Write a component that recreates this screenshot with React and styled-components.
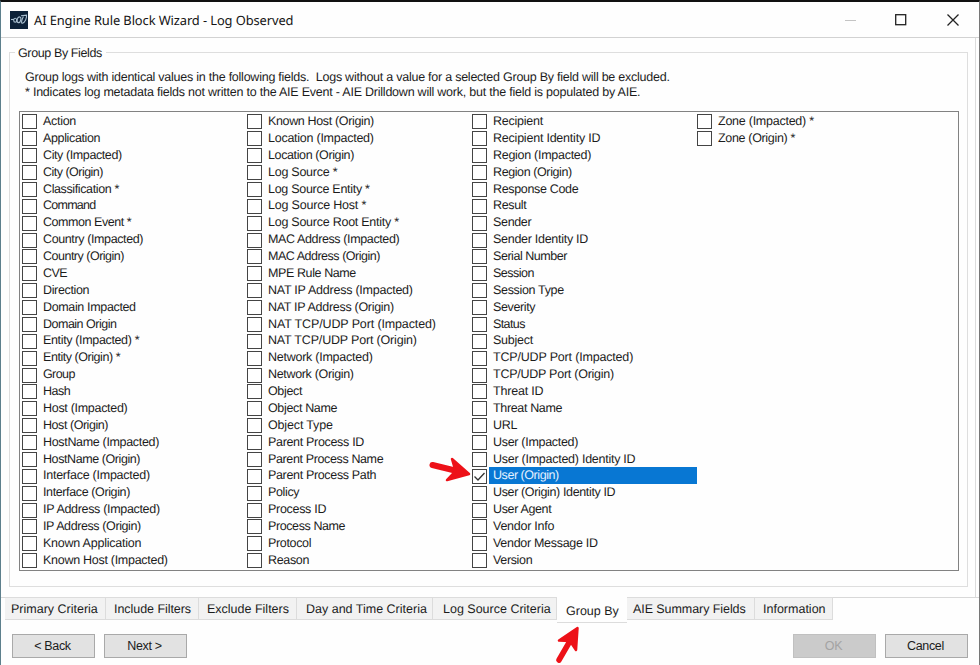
import React from "react";
import styled, { createGlobalStyle } from "styled-components";

const Global = createGlobalStyle`
  * { box-sizing: border-box; }
  body { margin: 0; background: #fff; overflow: hidden; }
`;

const Window = styled.div`
  position: relative;
  display: flex;
  flex-direction: column;
  width: 980px;
  height: 665px;
  background: #fefefe;
  border-top: 2px solid #111;
  border-left: 1px solid #5d7f8c;
  border-right: 1px solid #777;
  font-family: "Liberation Sans", Arial, sans-serif;
  font-size: 12.5px;
  color: #1c1c1c;
  white-space: pre;
  text-rendering: geometricPrecision;
`;

const TitleBar = styled.header`
  display: flex;
  align-items: center;
  height: 36px;
  flex: none;
  padding-left: 9px;
  border-bottom: 1px solid #d2d2d2;
`;

const AppIcon = styled.svg`
  width: 18px;
  height: 18px;
  flex: none;
`;

const Title = styled.h1`
  margin: 0 auto 0 6px;
  font: 400 12.9px/18px "Noto Sans", sans-serif;
  letter-spacing: ${(p) => p.$spacing}px;
  color: #151515;
`;

const Controls = styled.svg`
  width: 134px;
  height: 34px;
  flex: none;
`;

const Page = styled.main`
  height: 559px;
  flex: none;
  margin-right: 3px;
  padding: 9px 7px 0 8px;
  border-right: 1px solid #dcdcdc;
`;

const Group = styled.section`
  height: 541px;
  display: flex;
  flex-direction: column;
  position: relative;
  &::before {
    content: "";
    position: absolute;
    inset: 5px 0 1px 0;
    border: 1px solid #dedede;
  }
`;

const Legend = styled.h2`
  position: relative;
  align-self: flex-start;
  margin: 0 0 0 6px;
  padding: 0 4px 0 3px;
  background: #fefefe;
  font-size: 12.5px;
  font-weight: 400;
  line-height: 13px;
  letter-spacing: ${(p) => p.$spacing}px;
`;

const Notes = styled.div`
  margin: 10px 0 0 16px;
  position: relative;
`;

const Note = styled.p`
  margin: 0;
  line-height: 15px;
  letter-spacing: ${(p) => p.$spacing}px;
`;

const List = styled.div`
  position: relative;
  display: grid;
  grid-template-columns: repeat(4, 225px);
  width: 940px;
  height: 460px;
  margin: 11px 0 0 10px;
  padding: 1px 0 0 2px;
  border: 1px solid #828282;
  background: #fefefe;
`;

const Column = styled.div`
  display: flex;
  flex-direction: column;
`;

const Row = styled.label`
  display: flex;
  align-items: center;
  height: 16.88px;
  flex: none;
  gap: 2px;
`;

const Box = styled.span`
  display: flex;
  width: 15px;
  height: 15px;
  margin-top: 1px;
  flex: none;
  border: 1px solid #444;
  background: #fff;
`;

const Label = styled.span`
  width: 208px;
  height: 16.88px;
  padding-left: 4px;
  line-height: 16px;
  letter-spacing: ${(p) => p.$spacing}px;
  color: ${(p) => (p.$selected ? "#e4f1ff" : "inherit")};
  background: ${(p) => (p.$selected ? "#0877d3" : "transparent")};
`;

const Tabs = styled.nav`
  display: flex;
  align-items: flex-start;
  height: 26px;
  flex: none;
  padding-left: 4px;
  border-top: 1px solid #d8d8d8;
`;

const Tab = styled.div`
  width: ${(p) => p.$width}px;
  height: ${(p) => (p.$active ? 26 : 23)}px;
  margin-top: -1px;
  padding-left: ${(p) => p.$inset}px;
  line-height: ${(p) => (p.$active ? 29 : 23)}px;
  letter-spacing: ${(p) => p.$spacing}px;
  background: ${(p) => (p.$active ? "#fefefe" : "#f2f2f2")};
  border: solid #dcdcdc;
  border-width: ${(p) => (p.$active ? "0 0 1px 0" : "1px 1px 1px 0")};
`;

const Footer = styled.footer`
  display: flex;
  gap: 9px;
  padding: 11px 11px 0 11px;
`;

const Button = styled.button`
  width: 83px;
  height: 24px;
  margin: 0 0 0 ${(p) => (p.$push ? "auto" : 0)};
  padding: 0 2px 0 0;
  font: inherit;
  letter-spacing: -0.35px;
  color: ${(p) => (p.disabled ? "#a3a3a3" : "#1c1c1c")};
  background: ${(p) => (p.disabled ? "#cbcbcb" : "#e2e2e2")};
  border: 1px solid ${(p) => (p.disabled ? "#c0c0c0" : "#a9a9a9")};
`;

const Arrow = styled.svg`
  position: absolute;
  left: ${(p) => p.$x}px;
  top: ${(p) => p.$y}px;
  width: ${(p) => p.$w}px;
  height: ${(p) => p.$h}px;
  pointer-events: none;
`;

// Each field: [name, letter spacing in px]
const columns = [
  [
    ["Action", -0.3], ["Application", -0.36], ["City (Impacted)", -0.4], ["City (Origin)", -0.52],
    ["Classification *", -0.38], ["Command", -0.75], ["Common Event *", -0.45], ["Country (Impacted)", -0.38],
    ["Country (Origin)", -0.5], ["CVE", -0.6], ["Direction", -0.35], ["Domain Impacted", -0.35],
    ["Domain Origin", -0.5], ["Entity (Impacted) *", -0.35], ["Entity (Origin) *", -0.45], ["Group", -0.6],
    ["Hash", -0.5], ["Host (Impacted)", -0.3], ["Host (Origin)", -0.45], ["HostName (Impacted)", -0.33],
    ["HostName (Origin)", -0.42], ["Interface (Impacted)", -0.25], ["Interface (Origin)", -0.38],
    ["IP Address (Impacted)", -0.32], ["IP Address (Origin)", -0.4], ["Known Application", -0.23],
    ["Known Host (Impacted)", -0.28],
  ],
  [
    ["Known Host (Origin)", -0.35], ["Location (Impacted)", -0.25], ["Location (Origin)", -0.38],
    ["Log Source *", -0.25], ["Log Source Entity *", -0.28], ["Log Source Host *", -0.2],
    ["Log Source Root Entity *", -0.25], ["MAC Address (Impacted)", -0.38], ["MAC Address (Origin)", -0.48],
    ["MPE Rule Name", -0.4], ["NAT IP Address (Impacted)", -0.24], ["NAT IP Address (Origin)", -0.3],
    ["NAT TCP/UDP Port (Impacted)", -0.13], ["NAT TCP/UDP Port (Origin)", -0.18], ["Network (Impacted)", -0.25],
    ["Network (Origin)", -0.33], ["Object", -0.35], ["Object Name", -0.35], ["Object Type", -0.15],
    ["Parent Process ID", -0.32], ["Parent Process Name", -0.37], ["Parent Process Path", -0.34],
    ["Policy", -0.35], ["Process ID", -0.3], ["Process Name", -0.4], ["Protocol", -0.35], ["Reason", -0.35],
  ],
  [
    ["Recipient", -0.25], ["Recipient Identity ID", -0.22], ["Region (Impacted)", -0.28],
    ["Region (Origin)", -0.4], ["Response Code", -0.33], ["Result", -0.35], ["Sender", -0.33],
    ["Sender Identity ID", -0.28], ["Serial Number", -0.45], ["Session", -0.5], ["Session Type", -0.33],
    ["Severity", -0.38], ["Status", -0.6], ["Subject", -0.25], ["TCP/UDP Port (Impacted)", -0.18],
    ["TCP/UDP Port (Origin)", -0.25], ["Threat ID", -0.2], ["Threat Name", -0.35], ["URL", -0.3],
    ["User (Impacted)", -0.3], ["User (Impacted) Identity ID", -0.26], ["User (Origin)", -0.45],
    ["User (Origin) Identity ID", -0.36], ["User Agent", -0.35], ["Vendor Info", -0.25],
    ["Vendor Message ID", -0.3], ["Version", -0.35],
  ],
  [["Zone (Impacted) *", -0.25], ["Zone (Origin) *", -0.33]],
];

// Each tab: [name, width, text inset, letter spacing]
const tabs = [
  ["Primary Criteria", 101, 6, 0],
  ["Include Filters", 93, 8, -0.05],
  ["Exclude Filters", 98, 8, 0],
  ["Day and Time Criteria", 136, 9, 0],
  ["Log Source Criteria", 124, 10, 0],
  ["Group By", 70, 9, 0],
  ["AIE Summary Fields", 128, 6, -0.07],
  ["Information", 78, 8, 0],
];

const selected = "User (Origin)";

function Field({ name, spacing }) {
  const on = name === selected;
  return (
    <Row>
      <Box>
        {on && (
          <svg width="13" height="13" viewBox="0 0 13 13">
            <path d="M1.5 6.5 5 10 11.5 3" fill="none" stroke="#333" strokeWidth="1.3" />
          </svg>
        )}
      </Box>
      <Label $selected={on} $spacing={spacing}>{name}</Label>
    </Row>
  );
}

export default function App() {
  return (
    <>
      <Global />
      <Window>
        <TitleBar>
          <AppIcon viewBox="0 0 18 18">
            <rect width="18" height="18" fill="#0d2239" />
            <g fill="none" stroke="#a9bfd0" strokeWidth="1.1">
              <path d="M1 8.5H4" />
              <ellipse cx="5.2" cy="9.3" rx="1.5" ry="2" />
              <ellipse cx="9" cy="8.8" rx="1.8" ry="2.9" transform="rotate(15 9 8.8)" />
              <path d="M11 4.8 16.5 4.2C17 7 15 11.5 12.5 12.2 10.8 12.3 11.6 9 13.4 5.5" />
            </g>
          </AppIcon>
          <Title $spacing={-0.1}>AI Engine Rule Block Wizard - Log Observed</Title>
          <Controls viewBox="0 0 134 34" fill="none">
            <path d="M0 17.5H11" stroke="#c4c4c4" />
            <rect x="50.7" y="11.7" width="10" height="10" stroke="#222" strokeWidth="1.3" />
            <path d="M102.5 11.5 113.5 22.5M113.5 11.5 102.5 22.5" stroke="#222" strokeWidth="1.3" />
          </Controls>
        </TitleBar>
        <Page>
          <Group>
            <Legend $spacing={-0.38}>Group By Fields</Legend>
            <Notes>
              <Note $spacing={-0.242}>Group logs with identical values in the following fields.  Logs without a value for a selected Group By field will be excluded.</Note>
              <Note $spacing={-0.225}>* Indicates log metadata fields not written to the AIE Event - AIE Drilldown will work, but the field is populated by AIE.</Note>
            </Notes>
            <List>
              {columns.map((fields) => (
                <Column key={fields[0][0]}>
                  {fields.map(([name, spacing]) => <Field key={name} name={name} spacing={spacing} />)}
                </Column>
              ))}
            </List>
          </Group>
        </Page>
        <Tabs>
          {tabs.map(([name, width, inset, spacing]) => (
            <Tab key={name} $width={width} $inset={inset} $spacing={spacing} $active={name === "Group By"}>{name}</Tab>
          ))}
        </Tabs>
        <Footer>
          <Button>&lt; Back</Button>
          <Button>Next &gt;</Button>
          <Button $push disabled>OK</Button>
          <Button>Cancel</Button>
        </Footer>
        <Arrow $x={426} $y={452} $w={46} $h={30} viewBox="0 0 46 30">
          <path d="M5.5 11 30 17" stroke="#ed1118" strokeWidth="6" strokeLinecap="round" />
          <path d="M42 20 25 5 28.500 17 20 26Z" fill="#ed1118" stroke="#ed1118" strokeWidth="2.500" strokeLinejoin="round" />
        </Arrow>
        <Arrow $x={553} $y={621} $w={30} $h={42} viewBox="0 0 30 42">
          <path d="M5 37 16 18" stroke="#ed1118" strokeWidth="5.500" strokeLinecap="round" />
          <path d="M23.500 5 5 17.500 16 18 22 27Z" fill="#ed1118" stroke="#ed1118" strokeWidth="2.500" strokeLinejoin="round" />
        </Arrow>
      </Window>
    </>
  );
}
